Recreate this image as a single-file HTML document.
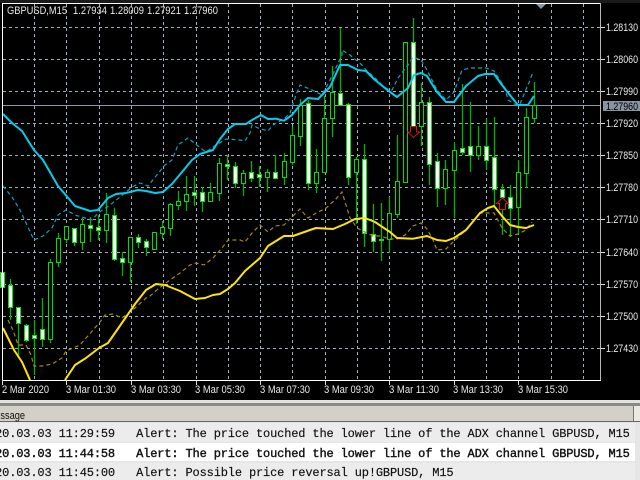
<!DOCTYPE html>
<html><head><meta charset="utf-8"><style>
html,body{margin:0;padding:0;background:#000;width:640px;height:480px;overflow:hidden}
svg{display:block}
.s{font-family:"Liberation Sans",sans-serif;font-size:11px;fill:#e8e8e8}
.x{font-family:"Liberation Sans",sans-serif;font-size:11px;fill:#e8e8e8}
.m{font-family:"Liberation Mono",monospace;font-size:12px;fill:#111;letter-spacing:-.15px;white-space:pre;stroke:#111;stroke-width:.15px}
.b{stroke-width:.4px}
</style></head><body>
<svg width="640" height="480" viewBox="0 0 640 480" xmlns="http://www.w3.org/2000/svg">
<rect width="640" height="480" fill="#000"/>
<rect x="0" y="0" width="640" height="3" fill="#1a1a1a"/>
<g fill="none" stroke="#9fb0c2" stroke-dasharray="3 3">
<path d="M3 27.5H600M3 59.5H600M3 91.5H600M3 123.5H600M3 155.5H600M3 187.5H600M3 219.5H600M3 252.5H600M3 284.5H600M3 316.5H600M3 348.5H600"/>
<path d="M34.5 4V380M66.5 4V380M99.5 4V380M131.5 4V380M163.5 4V380M196.5 4V380M228.5 4V380M260.5 4V380M292.5 4V380M325.5 4V380M357.5 4V380M389.5 4V380M422.5 4V380M454.5 4V380M486.5 4V380M518.5 4V380M551.5 4V380M583.5 4V380"/>
</g>
<path d="M3 105.5H600" stroke="#8b97a3"/>
<path fill="none" stroke="#00b400" stroke-width="1.3" d="M10.5 279V320M18.5 307V357M26.5 324V342M34.5 320V375M42.5 298V347M50.5 259V343M58.5 233V267M66.5 226V243M74.5 228V246M82.5 218V250M90.5 217V242M98.5 215V240M106.5 193V243M114.5 208V261M122.5 252V276M130.5 237V282M138.5 234V248M146.5 239V256M154.5 232V249M162.5 221V239M170.5 203V236M178.5 191V210M186.5 176V211M194.5 176V206M202.5 187V212M210.5 183V201M219.5 158V201M227.5 155V180M235.5 162V188M243.5 170V196M251.5 161V182M259.5 166V187M267.5 169V192M275.5 155V179M284.5 153V185M292.5 127V165M300.5 99V146M308.5 100V190M316.5 149V193M324.5 96V172M332.5 66V137M340.5 28V105M348.5 103V185M356.5 157V224M364.5 144V247M373.5 204V252M381.5 203V261M389.5 197V253M397.5 135V218M405.5 42V182M413.5 18V137M421.5 83V146M429.5 97V185M437.5 153V207M445.5 160V205M454.5 142V218M462.5 84V155M470.5 102V172M478.5 126V160M486.5 119V170M494.5 117V205M502.5 184V235M510.5 185V237M518.5 160V234M526.5 108V188M534.5 82V123"/>
<g fill="#000" stroke="#00e000">
<rect x="48.500" y="262.500" width="4" height="77"/>
<rect x="56.500" y="238.500" width="4" height="24"/>
<rect x="64.500" y="226.500" width="4" height="13"/>
<rect x="80.500" y="224.500" width="4" height="18"/>
<rect x="104.500" y="214.500" width="4" height="16"/>
<rect x="128.500" y="237.500" width="4" height="25"/>
<rect x="152.500" y="232.500" width="4" height="17"/>
<rect x="160.500" y="227.500" width="4" height="6"/>
<rect x="168.500" y="204.500" width="4" height="24"/>
<rect x="176.500" y="201.500" width="4" height="4"/>
<rect x="184.500" y="194.500" width="4" height="7"/>
<rect x="208.500" y="192.500" width="4" height="9"/>
<rect x="217.500" y="163.500" width="4" height="30"/>
<rect x="241.500" y="173.500" width="4" height="10"/>
<rect x="265.500" y="172.500" width="4" height="5"/>
<rect x="282.500" y="161.500" width="4" height="16"/>
<rect x="290.500" y="135.500" width="4" height="27"/>
<rect x="298.500" y="105.500" width="4" height="31"/>
<rect x="314.500" y="172.500" width="4" height="11"/>
<rect x="322.500" y="118.500" width="4" height="54"/>
<rect x="330.500" y="92.500" width="4" height="26"/>
<rect x="354.500" y="159.500" width="4" height="13"/>
<rect x="387.500" y="213.500" width="4" height="26"/>
<rect x="395.500" y="181.500" width="4" height="33"/>
<rect x="403.500" y="42.500" width="4" height="140"/>
<rect x="419.500" y="102.500" width="4" height="24"/>
<rect x="443.500" y="169.500" width="4" height="19"/>
<rect x="452.500" y="150.500" width="4" height="20"/>
<rect x="476.500" y="146.500" width="4" height="9"/>
<rect x="516.500" y="172.500" width="4" height="35"/>
<rect x="524.500" y="117.500" width="4" height="56"/>
<rect x="532.500" y="105.500" width="4" height="13"/>
</g>
<g fill="#fff" stroke="#00e800">
<rect x="0.500" y="272.500" width="4" height="15"/>
<rect x="8.500" y="285.500" width="4" height="22"/>
<rect x="16.500" y="307.500" width="4" height="16"/>
<rect x="24.500" y="325.500" width="4" height="15"/>
<rect x="32.500" y="335.500" width="4" height="3"/>
<rect x="40.500" y="329.500" width="4" height="10"/>
<rect x="72.500" y="228.500" width="4" height="14"/>
<rect x="88.500" y="225.500" width="4" height="3"/>
<rect x="96.500" y="227.500" width="4" height="3"/>
<rect x="112.500" y="215.500" width="4" height="44"/>
<rect x="120.500" y="258.500" width="4" height="4"/>
<rect x="136.500" y="237.500" width="4" height="5"/>
<rect x="144.500" y="241.500" width="4" height="6"/>
<rect x="192.500" y="192.500" width="4" height="3"/>
<rect x="200.500" y="192.500" width="4" height="9"/>
<rect x="225.500" y="164.500" width="4" height="2"/>
<rect x="233.500" y="166.500" width="4" height="17"/>
<rect x="249.500" y="172.500" width="4" height="6"/>
<rect x="257.500" y="174.500" width="4" height="3"/>
<rect x="273.500" y="172.500" width="4" height="6"/>
<rect x="306.500" y="103.500" width="4" height="80"/>
<rect x="338.500" y="93.500" width="4" height="12"/>
<rect x="346.500" y="104.500" width="4" height="73"/>
<rect x="362.500" y="159.500" width="4" height="74"/>
<rect x="371.500" y="234.500" width="4" height="7"/>
<rect x="379.500" y="239.500" width="4" height="1"/>
<rect x="411.500" y="42.500" width="4" height="84"/>
<rect x="427.500" y="102.500" width="4" height="62"/>
<rect x="435.500" y="161.500" width="4" height="27"/>
<rect x="460.500" y="148.500" width="4" height="4"/>
<rect x="468.500" y="146.500" width="4" height="9"/>
<rect x="484.500" y="146.500" width="4" height="14"/>
<rect x="492.500" y="157.500" width="4" height="32"/>
<rect x="500.500" y="189.500" width="4" height="8"/>
<rect x="508.500" y="197.500" width="4" height="11"/>
</g>
<path d="M410.500 126.500V132H407.500L413.500 137.500L419.500 132H416.500V126.500Z" fill="#000" stroke="#e01010"/>
<path d="M499.500 209.500V203.500H496.500L502.500 198L508.500 203.500H505.500V209.500Z" fill="#000" stroke="#e01010"/>
<path fill="none" stroke="#0aa5c0" stroke-width="1.2" stroke-dasharray="4 3" d="M3 186L12 197L20 210L34 240L43 236L52 228L58 215L66 210L75 215L85 218L92 220L98 213L110 205L120 197L132 187L140 183L148 186L165 165L172 160L178 145L188 138L198 146L206 152L213 147L226 139L240 140L245 141L250 133L252 125L258 128L268 131L273 125L285 118L290 113L296 95L300 85L312 90L322 95L330 80L342 55L342 50L350 55L362 65L366 70L375 78L385 88L392 90L398 78L408 65L413 57L421 60L427 70L437 90L446 100L454 92L462 70L470 68L486 68L494 71L505 88L508 100L516 105L520 104L530 80L533 72"/>
<path fill="none" stroke="#00cfee" stroke-width="2" stroke-linejoin="round" d="M3 114L12 123L22 131L34 150L43 160L58 186L75 206L90 211L98 210L108 198L116 194L126 193L138 190L146 191L155 193L163 192L172 184L192 160L200 154L213 150L220 139L228 129L235 124L246 124L252 120L261 115L268 119L276 118.700L284 120.700L292 115L300 105L308 98L318 99L330 87L340 65L348 65L358 70L366 71L375 80L390 92L397 97L408 88L414 75L421 73L427 76L437 92L446 102L454 102L466 86L478 76L485 74L494 74L505 89L518 105L528 105L534 96"/>
<path fill="none" stroke="#a08a14" stroke-width="1.2" stroke-dasharray="4 3" d="M8 320L13 330L18 345L26 345L31 355L34 366L42 366L52 364L62 358L66 351L80 345L100 322L105 315L113 314L122 318L135 308L146 298L150 296L158 289L170 280L180 273L190 265L196 263L204 265L213 258L222 248L228 240L240 240L245 242L252 233L260 225L268 232L275 226L284 225L292 217L300 209L308 218L318 212L325 209L335 200L342 192L346 205L350 218L357 228L365 232L373 236L381 236L389 239L397 239L405 235L413 226L421 223L427 229L433 240L437 250L446 249L454 241L466 230L480 213L494 213L502 228L510 236L518 234L526 230L532 222"/>
<path fill="none" stroke="#ffe600" stroke-width="2" stroke-linejoin="round" d="M3 328L14 350L22 362L30 380M65 380L75 365L86 358L99 348L108 343L124 320L135 304L146 290L156 284L165 285L180 291L195 299L205 298L213 295L220 294L228 289L235 283L245 271L260 258L268 246L284 236L293 236L310 230L316 228L333 229L345 224L355 219L365 218L375 222L390 232L397 238L413 238.700L427 236L437 240L446 241L454 238L466 230L480 213L488 208L494 206L502 216L510 225L518 227L526 228L534 225"/>
<path d="M536 4H546L541 9Z" fill="#8a98a6"/>
<path d="M2.500 3V381" stroke="#fff"/>
<path d="M2 3.500H600.500" stroke="#fff"/>
<path d="M600.500 3V381" stroke="#b8b8b8"/>
<path d="M2 380.500H601" stroke="#fff"/>
<path d="M601 27.500h4M601 59.500h4M601 91.500h4M601 123.500h4M601 155.500h4M601 187.500h4M601 219.500h4M601 252.500h4M601 284.500h4M601 316.500h4M601 348.500h4" stroke="#ddd"/>
<path d="M2.500 380v5M66.500 380v5M131.500 380v5M196.500 380v5M260.500 380v5M325.500 380v5M389.500 380v5M454.500 380v5M518.500 380v5" stroke="#ddd"/>
<text x="7" y="14" class="x" textLength="60" lengthAdjust="spacingAndGlyphs">GBPUSD,M15</text>
<text x="73" y="14" class="s" textLength="34" lengthAdjust="spacingAndGlyphs">1.27934</text>
<text x="110" y="14" class="s" textLength="34" lengthAdjust="spacingAndGlyphs">1.28009</text>
<text x="147" y="14" class="s" textLength="34" lengthAdjust="spacingAndGlyphs">1.27921</text>
<text x="184" y="14" class="s" textLength="34" lengthAdjust="spacingAndGlyphs">1.27960</text>
<text x="606" y="31" class="s" textLength="32" lengthAdjust="spacingAndGlyphs">1.28130</text>
<text x="606" y="63" class="s" textLength="32" lengthAdjust="spacingAndGlyphs">1.28060</text>
<text x="606" y="95" class="s" textLength="32" lengthAdjust="spacingAndGlyphs">1.27990</text>
<text x="606" y="127" class="s" textLength="32" lengthAdjust="spacingAndGlyphs">1.27920</text>
<text x="606" y="159" class="s" textLength="32" lengthAdjust="spacingAndGlyphs">1.27850</text>
<text x="606" y="191" class="s" textLength="32" lengthAdjust="spacingAndGlyphs">1.27780</text>
<text x="606" y="223" class="s" textLength="32" lengthAdjust="spacingAndGlyphs">1.27710</text>
<text x="606" y="256" class="s" textLength="32" lengthAdjust="spacingAndGlyphs">1.27640</text>
<text x="606" y="288" class="s" textLength="32" lengthAdjust="spacingAndGlyphs">1.27570</text>
<text x="606" y="320" class="s" textLength="32" lengthAdjust="spacingAndGlyphs">1.27500</text>
<text x="606" y="352" class="s" textLength="32" lengthAdjust="spacingAndGlyphs">1.27430</text>
<rect x="603" y="101" width="37" height="10" fill="#8895a2"/>
<text x="606" y="110" class="s" style="fill:#000" textLength="32" lengthAdjust="spacingAndGlyphs">1.27960</text>
<text x="2" y="393" class="x" textLength="47" lengthAdjust="spacingAndGlyphs">2 Mar 2020</text>
<text x="66" y="393" class="x" textLength="50" lengthAdjust="spacingAndGlyphs">3 Mar 01:30</text>
<text x="131" y="393" class="x" textLength="50" lengthAdjust="spacingAndGlyphs">3 Mar 03:30</text>
<text x="195" y="393" class="x" textLength="50" lengthAdjust="spacingAndGlyphs">3 Mar 05:30</text>
<text x="260" y="393" class="x" textLength="50" lengthAdjust="spacingAndGlyphs">3 Mar 07:30</text>
<text x="324" y="393" class="x" textLength="50" lengthAdjust="spacingAndGlyphs">3 Mar 09:30</text>
<text x="389" y="393" class="x" textLength="50" lengthAdjust="spacingAndGlyphs">3 Mar 11:30</text>
<text x="453" y="393" class="x" textLength="50" lengthAdjust="spacingAndGlyphs">3 Mar 13:30</text>
<text x="518" y="393" class="x" textLength="50" lengthAdjust="spacingAndGlyphs">3 Mar 15:30</text>
<rect x="0" y="400" width="640" height="3" fill="#e4e2dc"/>
<rect x="0" y="403" width="640" height="3" fill="#8a8a86"/>
<rect x="0" y="406" width="640" height="15" fill="#d4d0c8"/>
<rect x="0" y="421" width="640" height="1" fill="#666"/>
<rect x="0" y="422" width="640" height="58" fill="#e6e6e6"/>
<rect x="0" y="423" width="635" height="19" fill="#ececec"/>
<rect x="0" y="443" width="635" height="18" fill="#fff"/>
<rect x="0" y="463" width="635" height="17" fill="#ececec"/>
<rect x="634" y="406" width="6" height="15" fill="#ece9e0"/>
<path d="M633.500 406V422" stroke="#777"/>
<text x="-12.500" y="419" font-family="Liberation Sans, sans-serif" font-size="11" fill="#111" textLength="37.500" lengthAdjust="spacingAndGlyphs">Message</text>
<text x="-19" y="437" class="m">2020.03.03 11:29:59   Alert: The price touched the lower line of the ADX channel GBPUSD, M15</text>
<text x="-19" y="457" class="m b">2020.03.03 11:44:58   Alert: The price touched the lower line of the ADX channel GBPUSD, M15</text>
<text x="-19" y="476" class="m">2020.03.03 11:45:00   Alert: Possible price reversal up!GBPUSD, M15</text>
</svg>
</body></html>
